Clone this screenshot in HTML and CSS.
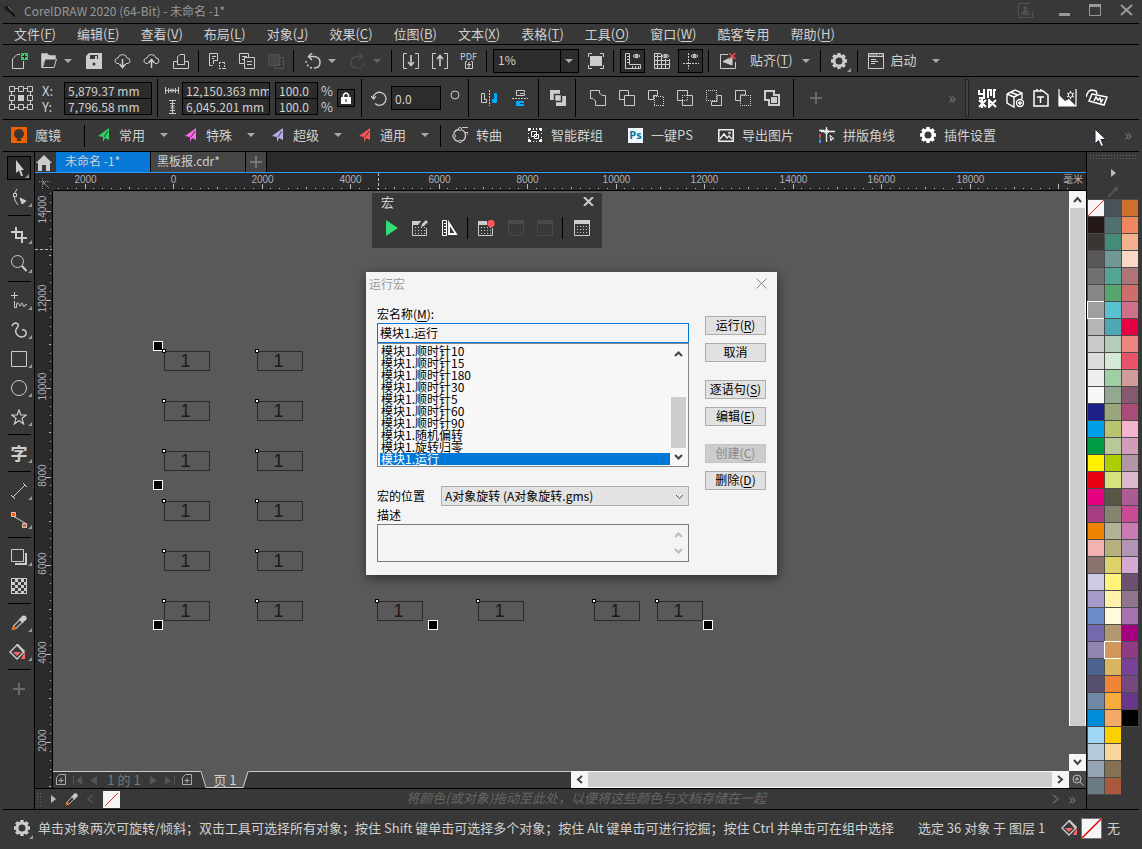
FILE: index.html
```html
<!DOCTYPE html>
<html lang="zh-CN">
<head>
    <meta charset="UTF-8">
    <meta name="viewport" content="width=device-width, initial-scale=1.0">
    <title>CorelDRAW 2020 (64-Bit) - 未命名 -1*</title>
    <link rel="stylesheet" href="styles.css">
</head>
<body>
    <!-- Shared icons -->
    <svg class="sprite" xmlns="http://www.w3.org/2000/svg">
        <symbol id="i-caret" viewBox="0 0 8 4"><path d="M0 0H8L4 4Z" fill="#aaa"/></symbol>
        <symbol id="i-plane" viewBox="0 0 12 14"><path d="M11 0V12L7 10L5 14V9L0 8Z" fill="currentColor"/><path d="M10 3L6 9" stroke="#383838" stroke-width="1"/></symbol>
        <symbol id="i-gear" viewBox="0 0 16 16">
            <circle cx="8" cy="8" r="5" fill="none" stroke="currentColor" stroke-width="3"/>
            <path d="M8 0V3M8 13V16M0 8H3M13 8H16M2.3 2.3L4.5 4.5M11.5 11.5L13.7 13.7M13.7 2.3L11.5 4.5M4.5 11.5L2.3 13.7" stroke="currentColor" stroke-width="3.4"/>
        </symbol>
        <symbol id="i-bucket" viewBox="0 0 20 18">
            <path d="M8 2L15 9L8 16L1 9Z" fill="none" stroke="#ccc" stroke-width="1.4"/>
            <path d="M7 1L9 1L16 8L14 10Z" fill="#ccc"/>
            <path d="M4 9H12L8 13Z" fill="#f66"/><path d="M16 9V16H12Z" fill="#f66"/>
        </symbol>
        <symbol id="i-picker" viewBox="0 0 16 16">
            <path d="M1.500 14.500L2.500 11L9 4.500L11.500 7L5 13.500Z" fill="none" stroke="#bbb" stroke-width="1.200"/>
            <path d="M1.500 14.500L3 11.500L5 13Z" fill="#f60" stroke="#f60"/>
            <path d="M8.500 3.500L12.500 7.500" stroke="#ccc" stroke-width="2"/><circle cx="12.800" cy="3.200" r="2.800" fill="#ccc"/>
        </symbol>
        <symbol id="i-grid" viewBox="0 0 16 16">
            <path d="M.5 .5H15.500V15.500H.5Z" fill="none" stroke="currentColor"/><path d="M0 0H16V4H0Z" fill="currentColor"/>
            <path d="M3 6.500H14M3 9.500H14M3 12.500H14" stroke="currentColor" stroke-dasharray="1 2"/>
        </symbol>
        <symbol id="i-addpage" viewBox="0 0 10 12"><path d="M3.500 .5H9.500V10.500H.5V3.500ZM5 4V9M2.500 6.500H7.500" fill="none" stroke="#aaa"/></symbol>
    </svg>

    <header class="titlebar">
        <svg class="app-icon" width="14" height="14" viewBox="0 0 14 14"><path d="M0 3L4 1L6 4L2 8Z" fill="#2b2b2b"/><path d="M4 2L12 11L13 13L10 12L2 4Z" fill="#151515"/><path d="M5 3L9 7" stroke="#777"/></svg>
        <span class="title">CorelDRAW 2020 (64-Bit) - 未命名 -1*</span>
        <div class="win-buttons">
            <svg class="account" width="16" height="16" viewBox="0 0 16 16" fill="none" stroke="#525252"><path d="M12 1.500H.5V15.500H14.500V10M3 12.500H12"/><path d="M4 11H11L8.500 8H6.500Z" fill="#525252"/><circle cx="7.500" cy="6" r="1.500" fill="#525252"/></svg>
            <button class="win-btn" aria-label="最小化"><svg width="11" height="12"><path d="M0 9H11V12H0Z" fill="#999"/></svg></button>
            <button class="win-btn" aria-label="最大化"><svg width="12" height="12"><path d="M.5 1.500H11.500V11.500H.5Z" fill="none" stroke="#999"/><path d="M0 0H12V3H0Z" fill="#999"/></svg></button>
            <button class="win-btn" aria-label="关闭"><svg width="13" height="12"><path d="M1 1L12 11M12 1L1 11" stroke="#999" stroke-width="2"/></svg></button>
        </div>
    </header>

    <nav class="menubar">
        <button>文件(<u>F</u>)</button>
        <button>编辑(<u>E</u>)</button>
        <button>查看(<u>V</u>)</button>
        <button>布局(<u>L</u>)</button>
        <button>对象(<u>J</u>)</button>
        <button>效果(<u>C</u>)</button>
        <button>位图(<u>B</u>)</button>
        <button>文本(<u>X</u>)</button>
        <button>表格(<u>T</u>)</button>
        <button>工具(<u>O</u>)</button>
        <button>窗口(<u>W</u>)</button>
        <button>酷客专用</button>
        <button>帮助(<u>H</u>)</button>
    </nav>

    <!-- Standard toolbar -->
    <div class="toolbar standard">
        <button class="ib" aria-label="新建"><svg width="18" height="16" viewBox="0 0 18 16"><path d="M9 1.500H6L1.500 6V15.500H12.500V8" fill="none" stroke="#ccc"/><path d="M10 0H17V7H10Z" fill="#3c6"/><path d="M13.500 1V6M11 3.500H16" stroke="#222"/></svg></button>
        <button class="ib" aria-label="打开"><svg width="16" height="16" viewBox="0 0 16 16"><path d="M1 15V1H6L8 3H14V6" fill="none" stroke="#ccc" stroke-width="1.500"/><path d="M1.500 14.500L4 6H15.500L13 14.500Z" fill="none" stroke="#ccc"/><path d="M1 1H6L8 3H14V6H4L1 13Z" fill="#ccc"/></svg></button>
        <button class="caret" aria-label="最近文档"><svg><use href="#i-caret"/></svg></button>
        <button class="ib" aria-label="保存"><svg width="16" height="16" viewBox="0 0 16 16"><path d="M0 3L3 0H16V16H0Z" fill="#ccc"/><path d="M4 2H12V6H4Z" fill="#383838"/><path d="M10 3V6" stroke="#ccc" stroke-width="2"/><circle cx="8" cy="11" r="1.500" fill="#383838"/></svg></button>
        <button class="ib" aria-label="从云打开"><svg width="17" height="16" viewBox="0 0 17 16" fill="none" stroke="#ccc"><path d="M5 10.500H3Q.5 9.500 1 7Q2 5 4 5Q5 1.500 8.500 1.500T13 5Q16 5 16 8Q16 10 14 10.500H12"/><path d="M8.500 6V14M5.500 11L8.500 14.500L11.500 11" stroke-width="1.500"/></svg></button>
        <button class="ib" aria-label="保存到云"><svg width="17" height="16" viewBox="0 0 17 16" fill="none" stroke="#ccc"><path d="M5 10.500H3Q.5 9.500 1 7Q2 5 4 5Q5 1.500 8.500 1.500T13 5Q16 5 16 8Q16 10 14 10.500H12"/><path d="M8.500 15V7M5.500 10L8.500 6.500L11.500 10" stroke-width="1.500"/></svg></button>
        <button class="ib" aria-label="打印"><svg width="16" height="16" viewBox="0 0 16 16" fill="none" stroke="#ccc"><path d="M4.500 11V4L7 1.500H11.500V11M4.500 8.500H.5V15.500H15.500V8.500H11.500M4 11.500H12"/></svg></button>
        <span class="sep"></span>
        <button class="ib" aria-label="剪切"><svg width="17" height="16" viewBox="0 0 17 16" fill="none" stroke="#ccc"><path d="M3.500 12.500H.5V.5H8.500V7.500H4.500V11M3 3.500H7M3 5.500H5"/><path d="M10 9.500H16M10 15.500H17M10.500 9V16M15.500 9V16" stroke-dasharray="2 1"/></svg></button>
        <button class="ib" aria-label="复制"><svg width="16" height="16" viewBox="0 0 16 16" fill="none" stroke="#ccc"><path d="M5 10.500H.5V.5H9.500V4M3 3.500H8M3 6.500H5"/><path d="M5.500 4.500H15.500V15.500H5.500ZM8 8.500H13M8 11.500H13"/></svg></button>
        <button class="ib" aria-label="粘贴" disabled><svg width="16" height="16" viewBox="0 0 16 16" fill="none" stroke="#505050"><path d="M.5 1.500H11.500V12.500H.5Z" fill="#454545"/><path d="M6.500 4.500H15.500V15.500H6.500ZM9 8.500H13M9 11.500H13"/></svg></button>
        <span class="sep"></span>
        <button class="ib" aria-label="撤销"><svg width="16" height="16" viewBox="0 0 16 16" fill="none" stroke="#ccc" stroke-width="1.500"><path d="M4 3.500H9Q15 4 15 9.500Q15 15 9 15"/><path d="M7 15Q2 14 1 8" stroke-dasharray="2 2"/><path d="M7 0L3.500 3.500L7 7"/></svg></button>
        <button class="caret" aria-label="撤销列表"><svg><use href="#i-caret"/></svg></button>
        <button class="ib" aria-label="重做" disabled><svg width="16" height="16" viewBox="0 0 16 16" fill="none" stroke="#4d4d4d" stroke-width="1.500"><path d="M12 3.500H7Q1 4 1 9.500Q1 15 7 15"/><path d="M9 15Q14 14 15 8" stroke-dasharray="2 2"/><path d="M9 0L12.500 3.500L9 7"/></svg></button>
        <button class="caret dim" aria-label="重做列表" disabled><svg><use href="#i-caret"/></svg></button>
        <span class="sep"></span>
        <button class="ib" aria-label="导入"><svg width="16" height="16" viewBox="0 0 16 16" fill="none" stroke="#ccc"><path d="M4 .5H.5V15.500H4M12 .5H15.500V15.500H12"/><path d="M8 2V12M5 9L8 12.500L11 9" stroke-width="1.600"/></svg></button>
        <button class="ib" aria-label="导出"><svg width="16" height="16" viewBox="0 0 16 16" fill="none" stroke="#ccc"><path d="M4 .5H.5V15.500H4M12 .5H15.500V15.500H12"/><path d="M8 13V3M5 6L8 2.500L11 6" stroke-width="1.600"/></svg></button>
        <button class="ib pdf"><span>PDF</span><svg width="8" height="8" viewBox="0 0 8 8" fill="none" stroke="#ccc"><path d="M2 .5H.5V7.500H7.500V.5H6M4 7V1M2 3.500H6"/></svg></button>
        <span class="sep"></span>
        <span class="zoom-box">
            <select aria-label="缩放级别"><option>1%</option></select>
            <svg><use href="#i-caret"/></svg>
        </span>
        <button class="ib" aria-label="全屏预览"><svg width="16" height="16" viewBox="0 0 16 16" fill="none" stroke="#ccc"><path d="M4 .5H.5V4M12 .5H15.500V4M4 15.500H.5V12M12 15.500H15.500V12"/><path d="M2 3H14V13H2Z" fill="#ccc" stroke="none"/></svg></button>
        <span class="sep"></span>
        <button class="ib on" aria-label="标尺"><svg width="16" height="16" viewBox="0 0 16 16" fill="none" stroke="#ccc"><path d="M.5 .5H4.500V11.500H15.500V15.500H.5ZM2 3.500H4M2 6.500H4M2 9.500H4M7.500 13V15M10.500 13V15M13.500 13V15"/><path d="M8 3Q11.500 -.5 15 3Q11.500 6.500 8 3Z"/><circle cx="11.500" cy="3" r="1" fill="#ccc"/></svg></button>
        <button class="ib" aria-label="网格"><svg width="16" height="16" viewBox="0 0 16 16" fill="none" stroke="#ccc"><path d="M.5 1V15.500H15.500M3.500 1V15M7.500 1V15M11.500 6V15M15.500 6V15M0 3.500H7M0 7.500H16M0 11.500H16M0 .5H7"/><path d="M8 3Q11.500 -.5 15 3Q11.500 6.500 8 3Z"/><circle cx="11.500" cy="3" r="1" fill="#ccc"/></svg></button>
        <button class="ib on" aria-label="辅助线"><svg width="16" height="16" viewBox="0 0 16 16" fill="none" stroke="#ccc"><path d="M0 10.500H16M5.500 0V16" stroke-dasharray="2 1"/><path d="M8 3Q11.500 -.5 15 3Q11.500 6.500 8 3Z"/><circle cx="11.500" cy="3" r="1" fill="#ccc"/></svg></button>
        <span class="sep"></span>
        <button class="ib" aria-label="贴齐关闭"><svg width="16" height="16" viewBox="0 0 16 16" fill="none" stroke="#ccc"><path d="M8 1.500H.5V15.500H15.500V9"/><path d="M3 8.500L12 4V12Z" fill="#ccc"/><path d="M9 0L15.500 6M15.500 0L9 6" stroke="#f44" stroke-width="1.500"/></svg></button>
        <button class="tb-text snap">贴齐(<u>T</u>)</button>
        <button class="caret" aria-label="贴齐选项"><svg><use href="#i-caret"/></svg></button>
        <span class="sep"></span>
        <button class="ib corner" aria-label="选项"><svg class="gear"><use href="#i-gear"/></svg></button>
        <span class="sep"></span>
        <button class="ib" aria-label="应用程序启动器"><svg width="16" height="16" viewBox="0 0 16 16" fill="none" stroke="#ccc"><path d="M.5 .5H15.500V15.500H.5ZM0 3.500H16M3 6.500H8M3 8.500H10M3 10.500H7"/><path d="M1 2H15" stroke-dasharray="9 1 1 1"/></svg></button>
        <button class="tb-text">启动</button>
        <button class="caret" aria-label="启动选项"><svg><use href="#i-caret"/></svg></button>
    </div>

    <!-- Property bar -->
    <div class="toolbar props">
        <svg class="origin" width="24" height="24" viewBox="0 0 24 24" fill="none" stroke="#ccc"><path d="M.5 .5H5.500V5.500H.5ZM9.500 .5H14.500V5.500H9.500ZM18.500 .5H23.500V5.500H18.500ZM.5 9.500H5.500V14.500H.5ZM18.500 9.500H23.500V14.500H18.500ZM.5 18.500H5.500V23.500H.5ZM9.500 18.500H14.500V23.500H9.500ZM18.500 18.500H23.500V23.500H18.500ZM6 2.500H9M15 2.500H18M6 21.500H9M15 21.500H18M2.500 6V9M2.500 15V18M21.500 6V9M21.500 15V18"/><path d="M9 9H15V15H9Z" fill="#ccc" stroke="none"/></svg>
        <div class="pair">
            <label for="pos-x">X:</label><input id="pos-x" value="5,879.37 mm">
            <label for="pos-y">Y:</label><input id="pos-y" value="7,796.58 mm">
        </div>
        <span class="sep tall"></span>
        <div class="pair size">
            <label for="size-w" aria-label="宽度"><svg width="14" height="7" fill="none" stroke="#ccc"><path d="M.5 0V7M13.500 0V7M1 3.500H13M3.500 1V6M6 1.500V5.500M8 1.500V5.500M10.500 1V6"/></svg></label><input id="size-w" value="12,150.363 mm">
            <label for="size-h" aria-label="高度"><svg width="7" height="14" fill="none" stroke="#ccc"><path d="M0 .5H7M0 13.500H7M3.500 1V13M1 3.500H6M1.500 6H5.500M1.500 8H5.500M1 10.500H6"/></svg></label><input id="size-h" value="6,045.201 mm">
        </div>
        <div class="pair scale">
            <input id="scale-x" value="100.0"><label for="scale-x">%</label>
            <input id="scale-y" value="100.0"><label for="scale-y">%</label>
        </div>
        <button class="lock" aria-label="锁定比率"><svg width="10" height="12" viewBox="0 0 10 12"><path d="M2.500 6V3Q5 -1 7.500 3V6" fill="none" stroke="#fff" stroke-width="1.500"/><path d="M0 5H10V12H0Z" fill="#fff"/><path d="M5 7V10" stroke="#222"/></svg></button>
        <span class="sep tall"></span>
        <label class="rotate" for="angle" aria-label="旋转角度"><svg width="16" height="15" viewBox="0 0 16 15" fill="none" stroke="#ccc"><path d="M2 7A6.500 6.500 0 1 1 4 12.500M0 5L2.500 8L5 5.500" stroke-width="1.300"/></svg></label>
        <input id="angle" class="angle" value="0.0">
        <svg class="degree" width="10" height="10"><circle cx="5" cy="5" r="4" fill="none" stroke="#ccc"/></svg>
        <span class="sep tall"></span>
        <button class="ib wide" aria-label="水平镜像"><svg width="16" height="16" viewBox="0 0 16 16" fill="none" stroke="#ccc"><path d="M.5 3.500H3.500V9.500H5.500V12.500H.5Z"/><path d="M8.500 0V16" stroke-dasharray="2 1"/><path d="M15.500 3.500H13.500V9.500H11.500V12.500H15.500Z" fill="#0af" stroke="#0af"/></svg></button>
        <button class="ib wide" aria-label="垂直镜像"><svg width="16" height="16" viewBox="0 0 16 16" fill="none" stroke="#ccc"><path d="M12.500 2.500V.5H4.500V5.500H12.500V3.500H8"/><path d="M0 8.500H16" stroke-dasharray="2 1"/><path d="M4 11H12V13H8V14H12V16H4Z" fill="#0af" stroke="none"/></svg></button>
        <span class="sep tall"></span>
        <button class="ib" aria-label="合并"><svg width="16" height="16" viewBox="0 0 16 16"><path d="M0 0H10V10H0ZM6 6H16V16H6Z" fill="#ccc"/><path d="M4.500 4.500H11.500V11.500H4.500Z" fill="#ccc" stroke="#383838" stroke-width="1.500"/></svg></button>
        <span class="sep tall"></span>
        <div class="shaping">
            <button class="ib" aria-label="焊接"><svg width="16" height="16" viewBox="0 0 16 16" fill="none" stroke="#ccc"><path d="M.5 .5H9.500V3L12 5.500H15.500V15.500H5.500V11L3 8.500H.5Z"/></svg></button>
            <button class="ib" aria-label="修剪"><svg width="16" height="16" viewBox="0 0 16 16" fill="none" stroke="#ccc"><path d="M5 9.500H.5V.5H9.500V5.500M5.500 5.500H15.500V15.500H5.500Z"/></svg></button>
            <button class="ib" aria-label="相交"><svg width="16" height="16" viewBox="0 0 16 16" fill="none" stroke="#ccc"><path d="M5.500 9.500H.5V.5H9.500V5.500H5.500Z"/><path d="M6 6.500H16M6 15.500H16M6.500 6V16M15.500 7V16" stroke-dasharray="1 1"/></svg></button>
            <button class="ib" aria-label="简化"><svg width="16" height="16" viewBox="0 0 16 16" fill="none" stroke="#ccc"><path d="M5 10.500H.5V.5H10.500V5M11 5.500H15.500V15.500H5.500V11"/><path d="M5 5.500H11M5 10.500H11M5.500 5V11M10.500 5V11" stroke-dasharray="1 1"/></svg></button>
            <button class="ib" aria-label="移除后面对象"><svg width="16" height="16" viewBox="0 0 16 16" fill="none" stroke="#ccc"><path d="M0 .5H11M0 10.500H11M.5 0V11M10.500 0V11" stroke-dasharray="1 1"/><path d="M11 5.500H15.500V15.500H5.500V11.500H11Z"/></svg></button>
            <button class="ib" aria-label="移除前面对象"><svg width="16" height="16" viewBox="0 0 16 16" fill="none" stroke="#ccc"><path d="M5.500 10.500H.5V.5H10.500V5H5.500Z"/><path d="M5 5.500H16M5 15.500H16M5.500 5V16M15.500 5V16" stroke-dasharray="1 1"/></svg></button>
            <button class="ib" aria-label="边界"><svg width="16" height="16" viewBox="0 0 16 16" fill="none" stroke="#ccc" stroke-width="2"><path d="M1 1H10V5H15V15H5V10H1Z"/><path d="M8 8H12V12H8Z" fill="#ccc"/></svg></button>
        </div>
        <span class="sep tall"></span>
        <button class="add" aria-label="添加"><svg width="12" height="12"><path d="M6 0V12M0 6H12" stroke="#6a6a6a" stroke-width="2"/></svg></button>
        <div class="script-tools">
            <span class="more">»</span>
            <span class="grip-bar"></span>
            <button aria-label="万能工具"><svg width="19" height="19" viewBox="0 0 19 19" fill="none" stroke="#fff" stroke-width="2"><path d="M1 1V5H6V0M6 5V9H1M10 9V1H13V7M16 9V1H18M1 11L8 18M8 11L1 18M4 10V19M11 11L18 18M18 11L11 18M11 10V19"/></svg></button>
            <button aria-label="打包"><svg width="18" height="19" viewBox="0 0 18 19" fill="none" stroke="#fff" stroke-width="1.400"><path d="M1 5L9 1L16 4V10M1 5V14L8 18V8L1 5M8 8L16 4M4 3L12 6"/><circle cx="14" cy="14" r="3.500"/><path d="M14 12V16M12 14H16"/></svg></button>
            <button aria-label="文本工具"><svg width="16" height="18" viewBox="0 0 16 18" fill="none" stroke="#fff" stroke-width="1.500"><path d="M1 2H10L15 6V17H1ZM4 2V0M8 2V0M4 8H11M7.500 8V14"/></svg></button>
            <button aria-label="图像工具"><svg width="19" height="18" viewBox="0 0 19 18"><path d="M1 0V17H18V0" fill="none" stroke="#fff" stroke-width="1.200"/><path d="M1 17V6L7 12L11 10L18 17Z" fill="#fff"/><path d="M12.500 2V10M9 4L16 8M16 4L9 8" stroke="#fff"/><circle cx="12.500" cy="6" r="2.300" fill="#383838" stroke="#fff"/></svg></button>
            <button aria-label="卡片"><svg width="22" height="18" viewBox="0 0 22 18" fill="none" stroke="#fff" stroke-width="1.500"><path d="M6 5L21 8L18 16L3 12Z"/><path d="M0 8Q2 1 6 1L10 2L11 5M8 12L10 8L12 11L14 9L15 13L17 10"/></svg></button>
        </div>
    </div>

    <!-- Plugin bar -->
    <div class="toolbar plugins">
        <button class="plug brand"><svg width="16" height="16"><path d="M0 0H16V16H0Z" fill="#f06000"/><circle cx="8" cy="7" r="5" fill="#3a3530"/><path d="M6 12H10V14H6Z" fill="#3a3530"/></svg>魔镜</button>
        <span class="sep"></span>
        <button class="plug drop"><svg class="plane green"><use href="#i-plane"/></svg>常用<svg class="arrow"><use href="#i-caret"/></svg></button>
        <button class="plug drop"><svg class="plane pink"><use href="#i-plane"/></svg>特殊<svg class="arrow"><use href="#i-caret"/></svg></button>
        <button class="plug drop"><svg class="plane lilac"><use href="#i-plane"/></svg>超级<svg class="arrow"><use href="#i-caret"/></svg></button>
        <button class="plug drop"><svg class="plane red"><use href="#i-plane"/></svg>通用<svg class="arrow"><use href="#i-caret"/></svg></button>
        <span class="sep"></span>
        <div class="plug-list">
            <button class="plug"><svg width="16" height="16" viewBox="0 0 16 16" fill="none" stroke="#ccc"><circle cx="7.500" cy="8.500" r="6" stroke-width="1.300" stroke-dasharray="8 2"/><circle cx="8" cy="2" r="1.500" fill="#383838"/><circle cx="2" cy="9" r="1.500" fill="#383838"/><circle cx="8" cy="14.500" r="1.300" fill="#383838"/><path d="M10 .5H16M13 5.500H16V8"/></svg>转曲</button>
            <button class="plug"><svg width="16" height="16" viewBox="0 0 16 16"><path d="M1 1h3v2h-1v1h-2zM6 1h1v2h-1zM9 1h1v2h-1zM12 1h3v3h-2v-1h-1zM1 6h1v1h-1zM1 10h1v1h-1zM14 6h1v1h-1zM14 10h1v1h-1zM1 12h2v1h1v2h-3zM6 14h1v1h-1zM9 14h1v1h-1zM13 12h2v3h-3v-2h1z" fill="#fff"/><path d="M4.500 4.500H9.500V9.500H4.500ZM7.500 7.500H11.500V11.500H7.500Z" fill="none" stroke="#fff"/></svg>智能群组</button>
            <button class="plug ps"><span class="ps-logo">Ps</span>一键PS</button>
            <button class="plug"><svg width="16" height="13" viewBox="0 0 16 13" fill="none" stroke="#eee"><path d="M.8 .8H15.200V12.200H.8Z" stroke-width="1.600"/><path d="M2 10L6 5L9 9L11 7L14 10" stroke-width="1.400"/><circle cx="11.500" cy="4" r="1"/></svg>导出图片</button>
            <button class="plug"><svg width="16" height="16" viewBox="0 0 16 16" fill="none" stroke="#eee"><path d="M2 4.500H16M7.500 0V15M0 3.500H5" stroke-width="1.300"/><circle cx="7.500" cy="4.500" r="2"/><path d="M11 8L15 12H12V14Z"/><path d="M1 7V10" stroke="#e44" stroke-width="2"/><path d="M1 10V13" stroke="#4a6"/><path d="M1 13V16" stroke="#48f" stroke-width="2"/></svg>拼版角线</button>
            <button class="plug"><svg class="gear white"><use href="#i-gear"/></svg>插件设置</button>
        </div>
        <span class="more">»</span>
        <svg class="pointer" width="13" height="20" viewBox="0 0 13 20"><path d="M1 1V16L4.500 12.500L7 18.500L9.500 17.500L7 11.500H12Z" fill="#fff" stroke="#223"/></svg>
    </div>

    <main class="workspace">
        <aside class="toolbox">
            <button class="tool on"><svg width="16" height="17" viewBox="0 0 16 17"><path d="M5 0V13L8 10.500L10 16H12L10 10H13Z" fill="#ccc"/></svg></button>
            <button class="tool"><svg width="16" height="17" viewBox="0 0 16 17" fill="none" stroke="#ccc"><path d="M6 0Q0 8 7 16"/><path d="M2.500 4.500H5.500V7.500H2.500Z" fill="#383838"/><path d="M9 9L15 12L11 15Z" fill="#ccc"/></svg></button>
            <span class="rule"></span>
            <button class="tool"><svg width="16" height="16" viewBox="0 0 16 16" fill="none" stroke="#ccc" stroke-width="2"><path d="M0 5H11V16M5 0V11H16"/></svg></button>
            <button class="tool"><svg width="16" height="17" viewBox="0 0 16 17" fill="none" stroke="#ccc"><circle cx="6.500" cy="6.500" r="6"/><path d="M11 11L15.500 16" stroke-width="2"/></svg></button>
            <span class="rule"></span>
            <button class="tool"><svg width="16" height="17" viewBox="0 0 16 17" fill="none" stroke="#ccc"><path d="M3.500 0V7M0 3.500H7M3.500 9V15.500H5.500V12Q7 9 8 12.500T10 12.500T12 13T14 13L16 12.500"/></svg></button>
            <button class="tool"><svg width="16" height="16" viewBox="0 0 16 16" fill="none" stroke="#ccc" stroke-width="1.500"><path d="M1 4Q2 1 5 1Q9 2 6 6Q4 8 5 11Q7 15 11 15Q16 14 15 10Q14 7 11 8"/></svg></button>
            <button class="tool"><svg width="16" height="16" viewBox="0 0 16 16" fill="none" stroke="#ccc"><path d="M.5 .5H15.500V15.500H.5Z"/></svg></button>
            <button class="tool"><svg width="16" height="16" viewBox="0 0 16 16" fill="none" stroke="#ccc"><circle cx="8" cy="8" r="7.500"/></svg></button>
            <button class="tool"><svg width="16" height="16" viewBox="0 0 16 16" fill="none" stroke="#ccc"><path d="M8 1L9.800 6H15.300L11 9.300L12.600 15L8 11.500L3.400 15L5 9.300L.7 6H6.200Z" stroke-width="1.200"/></svg></button>
            <span class="rule"></span>
            <button class="tool glyph">字</button>
            <span class="rule"></span>
            <button class="tool"><svg width="16" height="16" viewBox="0 0 16 16" fill="none" stroke="#ccc"><path d="M2 14L14 2M0 12L4 16M12 0L16 4"/></svg></button>
            <button class="tool"><svg width="16" height="16" viewBox="0 0 16 16"><path d="M2 4L14 11" stroke="#ccc"/><path d="M.5 .5H4.500V4.500H.5ZM11.500 11.500H15.500V15.500H11.500Z" fill="#f50" stroke="#ccc"/></svg></button>
            <span class="rule"></span>
            <button class="tool"><svg width="17" height="16" viewBox="0 0 17 16" fill="none" stroke="#ccc"><path d="M.5 .5H12.500V12.500H.5Z"/><path d="M15 4V15H4" stroke-width="2"/></svg></button>
            <button class="tool plain"><span class="checker"></span></button>
            <span class="rule"></span>
            <button class="tool"><svg width="16" height="16"><use href="#i-picker"/></svg></button>
            <button class="tool"><svg width="20" height="18"><use href="#i-bucket"/></svg></button>
            <span class="rule"></span>
            <button class="tool plain add-tool"><svg width="12" height="12"><path d="M6 0V12M0 6H12" stroke="#6a6a6a" stroke-width="2"/></svg></button>
        </aside>

        <section class="document">
            <div class="tabs">
                <button class="home" aria-label="欢迎屏幕"><svg width="16" height="16" viewBox="0 0 16 16"><path d="M8 0L16 8H14V16H10V10H6V16H2V8H0Z" fill="#ccc"/></svg></button>
                <button class="tab active">未命名 -1*</button>
                <button class="tab">黑板报.cdr*</button>
                <button class="tab-add" aria-label="新建文档"><svg width="12" height="12"><path d="M6 0V12M0 6H12" stroke="#777" stroke-width="2"/></svg></button>
            </div>
            <div class="ruled">
                <div class="ruler-corner"><svg width="11" height="11" fill="none" stroke="#888"><path d="M0 3.500H11M3.500 0V11" stroke-dasharray="1 1"/><path d="M4 4L10 10M4 7V4H7"/></svg></div>
                <svg class="ruler-h" id="ruler-h"></svg>
                <svg class="ruler-v" id="ruler-v"></svg>

                <div class="view">
                    <div class="canvas" id="canvas">
                        <div class="macro-bar">
                            <div class="macro-head"><span>宏</span><button aria-label="关闭"><svg width="11" height="9"><path d="M1 0L10 9M10 0L1 9" stroke="#ccc" stroke-width="2"/></svg></button></div>
                            <div class="macro-tools">
                                <button class="ib"><svg width="12" height="16"><path d="M0 0L12 8L0 16Z" fill="#3d7"/></svg></button>
                                <button class="ib"><svg width="17" height="16" viewBox="0 0 17 16"><path d="M9 1.500H.5V15.500H14.500V8" fill="none" stroke="#ccc"/><path d="M0 1H9L6 5H0Z" fill="#ccc"/><path d="M3 7.500H13M3 10.500H13M3 13.500H13" stroke="#ccc" stroke-dasharray="1 2"/><path d="M9 7L10 4L14 0L16 2L12 6Z" fill="#ccc"/></svg></button>
                                <button class="ib"><svg width="16" height="16" viewBox="0 0 16 16" fill="none" stroke="#fff"><path d="M.5 .5H4.500V15.500H.5ZM2 3.500H4M2 6.500H4M2 9.500H4M2 12.500H4"/><path d="M7 3V14H14Z" stroke-width="1.800"/></svg></button>
                                <span class="sep"></span>
                                <button class="ib"><svg width="17" height="16" viewBox="0 0 17 16"><path d="M9 1.500H.5V15.500H14.500V8" fill="none" stroke="#ccc"/><path d="M0 1H9V5H0Z" fill="#ccc"/><path d="M3 7.500H13M3 10.500H13M3 13.500H13" stroke="#ccc" stroke-dasharray="1 2"/><circle cx="13" cy="3.500" r="3.700" fill="#f55"/></svg></button>
                                <button class="ib" disabled><svg class="gear faint"><use href="#i-grid"/></svg></button>
                                <button class="ib" disabled><svg class="gear faint"><use href="#i-grid"/></svg></button>
                                <span class="sep"></span>
                                <button class="ib"><svg class="gear"><use href="#i-grid"/></svg></button>
                            </div>
                        </div>

                        <div class="dialog" role="dialog" aria-labelledby="dlg-title">
                            <div class="dialog-head">
                                <span id="dlg-title">运行宏</span>
                                <button aria-label="关闭"><svg width="11" height="11"><path d="M.5 .5L10.500 10.500M10.500 .5L.5 10.500" stroke="#888"/></svg></button>
                            </div>
                            <div class="dialog-body">
                                <div class="dialog-main">
                                    <label for="macro-name">宏名称(<u>M</u>):</label>
                                    <input id="macro-name" class="macro-name" value="模块1.运行">
                                    <div class="list-box">
                                        <ul role="listbox" aria-label="宏名称">
                                            <li>模块1.顺时针10</li>
                                            <li>模块1.顺时针15</li>
                                            <li>模块1.顺时针180</li>
                                            <li>模块1.顺时针30</li>
                                            <li>模块1.顺时针5</li>
                                            <li>模块1.顺时针60</li>
                                            <li>模块1.顺时针90</li>
                                            <li>模块1.随机偏转</li>
                                            <li>模块1.旋转归零</li>
                                            <li class="selected">模块1.运行</li>
                                        </ul>
                                        <div class="list-scroll">
                                            <svg width="9" height="6"><path d="M1 5L4.500 1.500L8 5" fill="none" stroke="#444" stroke-width="2"/></svg>
                                            <span></span>
                                            <svg width="9" height="6"><path d="M1 1L4.500 4.500L8 1" fill="none" stroke="#444" stroke-width="2"/></svg>
                                        </div>
                                    </div>
                                    <div class="location">
                                        <label for="macro-loc">宏的位置</label>
                                        <select id="macro-loc"><option>A对象旋转 (A对象旋转.gms)</option></select>
                                        <svg width="9" height="6"><path d="M1 1L4.500 4.500L8 1" fill="none" stroke="#555"/></svg>
                                    </div>
                                    <label class="desc-label" for="macro-desc">描述</label>
                                    <div class="desc">
                                        <textarea id="macro-desc"></textarea>
                                        <svg width="9" height="22"><path d="M1 5L4.500 1.500L8 5M1 17L4.500 20.500L8 17" fill="none" stroke="#bbb" stroke-width="2"/></svg>
                                    </div>
                                </div>
                                <div class="dialog-actions">
                                    <button>运行(<u>R</u>)</button>
                                    <button>取消</button>
                                    <button class="group">逐语句(<u>S</u>)</button>
                                    <button>编辑(<u>E</u>)</button>
                                    <button class="group" disabled>创建(<u>C</u>)</button>
                                    <button>删除(<u>D</u>)</button>
                                </div>
                            </div>
                        </div>
                    </div>
                    <div class="scroll-v">
                        <button aria-label="向上"><svg width="9" height="7"><path d="M1 6L4.500 2L8 6" fill="none" stroke="#444" stroke-width="2"/></svg></button>
                        <span class="thumb"></span>
                        <button aria-label="向下"><svg width="9" height="7"><path d="M1 1L4.500 5L8 1" fill="none" stroke="#444" stroke-width="2"/></svg></button>
                    </div>
                </div>

                <div class="page-row">
                    <div class="pages">
                        <button aria-label="添加页"><svg width="10" height="12"><use href="#i-addpage"/></svg></button>
                        <button aria-label="第一页"><svg width="10" height="9"><path d="M9 0V9L3 4.500ZM0 0H1V9H0Z" fill="#555"/></svg></button>
                        <button aria-label="上一页"><svg width="8" height="9"><path d="M7 0V9L0 4.500Z" fill="#555"/></svg></button>
                        <span class="page-count">1 的 1</span>
                        <button aria-label="下一页"><svg width="8" height="9"><path d="M0 0V9L7 4.500Z" fill="#555"/></svg></button>
                        <button aria-label="最后一页"><svg width="10" height="9"><path d="M0 0V9L6 4.500ZM9 0H10V9H9Z" fill="#555"/></svg></button>
                        <button aria-label="添加页"><svg width="10" height="12"><use href="#i-addpage"/></svg></button>
                        <button class="page-tab"><svg width="48" height="17" viewBox="0 0 48 17"><path d="M0 0L5 16H43L48 0Z" fill="#595959"/><path d="M0 .5L5 16.500H42L47 .5" fill="none" stroke="#ccc"/></svg><span>页 1</span></button>
                    </div>
                    <div class="scroll-h">
                        <button aria-label="向左"><svg width="7" height="9"><path d="M6 1L2 4.500L6 8" fill="none" stroke="#444" stroke-width="2"/></svg></button>
                        <span class="thumb"></span>
                        <button aria-label="向右"><svg width="7" height="9"><path d="M1 1L5 4.500L1 8" fill="none" stroke="#444" stroke-width="2"/></svg></button>
                    </div>
                    <button class="navigator" aria-label="导航器"><svg width="12" height="12" fill="none" stroke="#bbb"><circle cx="5" cy="5" r="4"/><path d="M8 8L11.500 11.500M5 3V7M3 5H7"/></svg></button>
                </div>
            </div>
            <div class="doc-palette">
                <span class="dots"></span>
                <svg width="5" height="8"><path d="M0 0L5 4L0 8Z" fill="#bbb"/></svg>
                <svg width="13" height="13"><use href="#i-picker"/></svg>
                <svg width="7" height="10"><path d="M6 1L1 5L6 9" fill="none" stroke="#555" stroke-width="1.500"/></svg>
                <svg class="no-color" width="17" height="17"><path d="M0 0H17V17H0Z" fill="#f5f5f5"/><path d="M2 15L15 2" stroke="#e22"/></svg>
                <em>将颜色(或对象)拖动至此处，以便将这些颜色与文档存储在一起</em>
                <svg width="7" height="10"><path d="M1 1L6 5L1 9" fill="none" stroke="#666" stroke-width="1.500"/></svg>
                <span class="more">»</span>
            </div>
        </section>

        <aside class="palette">
            <div class="palette-head">
                <span class="dots"></span>
                <svg width="5" height="8"><path d="M0 0L5 4L0 8Z" fill="#bbb"/></svg>
                <svg class="ghost" width="12" height="12"><path d="M1 11L8 4M7 2L10 5M9 1L11 3" stroke="#555" stroke-width="2"/></svg>
            </div>
            <div class="swatches" id="swatches"></div>
        </aside>
    </main>

    <footer class="status">
        <button class="ib corner" aria-label="状态栏选项"><svg class="gear"><use href="#i-gear"/></svg></button>
        <span class="hint">单击对象两次可旋转/倾斜；双击工具可选择所有对象；按住 Shift 键单击可选择多个对象；按住 Alt 键单击可进行挖掘；按住 Ctrl 并单击可在组中选择</span>
        <span class="selection">选定 36 对象 于 图层 1</span>
        <span class="fill-info">
            <svg width="20" height="18"><use href="#i-bucket"/></svg>
            <svg width="21" height="21"><path d="M.5 .5H20.500V20.500H.5Z" fill="#f5f5f5" stroke="#777"/><path d="M1 20L20 1" stroke="#d00" stroke-width="1.500"/></svg>
            <span>无</span>
        </span>
    </footer>

    <script src="script.js"></script>
</body>
</html>
```
FILE: styles.css
```css
*,
*::before {
    box-sizing: border-box;
}

body {
    margin: 0;
    padding: 0 3px;
    display: flex;
    flex-direction: column;
    height: 100vh;
    overflow: hidden;
    background: #383838;
    color: #d0d0d0;
    font-family: "Noto Sans CJK SC", sans-serif;
    font-size: 13px;
    line-height: 20px;
    white-space: nowrap;
}

button,
input,
select,
textarea {
    font: inherit;
    color: inherit;
    margin: 0;
    padding: 0;
    border: 0;
    border-radius: 0;
    background: none;
    outline: none;
    appearance: none;
}

svg {
    display: block;
    flex: none;
}

.sprite {
    position: absolute;
    width: 0;
    height: 0;
}

/* Title and menu */
.titlebar {
    flex: none;
    display: flex;
    align-items: center;
    height: 24px;
    padding: 0 6px 2px 0;
    border-bottom: 1px solid #000;
    color: #999;
}

.app-icon {
    margin-right: 7px;
}

.title {
    font-size: 12px;
}

.win-buttons {
    display: flex;
    align-items: center;
    gap: 19px;
    margin: 0 0 2px auto;
}

.account {
    margin-right: 6px;
}

.menubar {
    flex: none;
    display: flex;
    height: 21px;
    border-bottom: 1px solid #000;
}

.menubar button {
    padding: 0 10px 2px 11px;
}

u {
    text-underline-offset: 2px;
}

/* Toolbars */
.toolbar {
    flex: none;
    display: flex;
    align-items: center;
    border-bottom: 1px solid #000;
}

.ib {
    flex: none;
    display: flex;
    align-items: center;
    justify-content: center;
    width: 29px;
    height: 24px;
}

.ib.on {
    width: 25px;
    margin: 0 2px;
    border: 1px solid #000;
    background: #2c2c2c;
}

.ib.wide {
    width: 31px;
}

.sep {
    flex: none;
    width: 1px;
    height: 22px;
    margin: 0 4px 0 3px;
    background: #000;
}

.sep.tall {
    height: 38px;
}

.caret {
    flex: none;
    width: 16px;
    height: 24px;
    padding-left: 1px;
}

.caret svg,
.zoom-box svg,
.arrow {
    width: 8px;
    height: 4px;
}

.dim {
    opacity: 0.4;
}

.gear {
    width: 16px;
    height: 16px;
    color: #ccc;
}

.gear.white {
    color: #fff;
}

.gear.faint {
    color: #4a4a4a;
}

.corner,
.tool {
    position: relative;
}

.corner::after,
.tool::after {
    content: "";
    position: absolute;
    right: 3px;
    bottom: 1px;
    border: 2px solid transparent;
    border-right-color: #999;
    border-bottom-color: #999;
}

.standard {
    height: 32px;
    padding-left: 2px;
}

.pdf {
    flex-direction: column;
    font-size: 9px;
    line-height: 9px;
}

.zoom-box {
    position: relative;
    width: 86px;
    height: 24px;
    margin: 0 2px;
    border: 1px solid #000;
    background: #2c2c2c;
}

.zoom-box select {
    width: 100%;
    height: 22px;
    padding: 0 0 2px 4px;
    font-size: 12px;
}

.zoom-box svg {
    position: absolute;
    right: 5px;
    top: 9px;
}

.zoom-box::after {
    content: "";
    position: absolute;
    right: 17px;
    top: 0;
    width: 1px;
    height: 22px;
    background: #000;
}

.tb-text {
    padding: 0 14px 2px 0;
}

.tb-text.snap {
    padding: 0 8px 2px;
}

.props {
    height: 43px;
    padding-left: 6px;
}

.props input {
    width: 88px;
    height: 17px;
    padding-left: 3px;
    border: 1px solid #000;
    background: #2c2c2c;
    font-size: 12px;
    line-height: 15px;
}

.pair {
    display: grid;
    grid-template-columns: 22px 88px;
    grid-auto-rows: 16px;
    align-items: start;
    margin: 0 2px 0 9px;
    line-height: 17px;
}

.pair.size {
    grid-template-columns: 17px 88px;
    margin: 0 5px 0 3px;
}

.pair.size label {
    display: flex;
    align-items: center;
    justify-content: center;
    height: 17px;
    padding-right: 3px;
}

.pair.scale {
    grid-template-columns: 43px 16px;
    column-gap: 3px;
    margin: 0;
}

.pair.scale input {
    width: 43px;
}

.lock {
    display: flex;
    align-items: center;
    justify-content: center;
    width: 18px;
    height: 18px;
    margin-right: 3px;
    border: 1px solid #000;
    background: #2c2c2c;
}

.rotate {
    margin: 0 4px 0 5px;
}

.props .angle {
    width: 50px;
    height: 24px;
}

.degree {
    margin: 0 5px 6px 9px;
}

.shaping {
    display: flex;
    margin: 0 4px 0 3px;
}

.add {
    margin-left: 12px;
}

.script-tools {
    display: flex;
    align-items: center;
    gap: 9px;
    margin: 0 31px 0 auto;
}

.more {
    padding-bottom: 3px;
    color: #777;
    font-size: 16px;
}

.grip-bar {
    width: 4px;
    height: 38px;
    border: 1px solid #222;
    background: #444;
}

.plugins {
    position: relative;
    height: 32px;
    padding-left: 8px;
}

.plug {
    display: flex;
    align-items: center;
    gap: 8px;
    padding-bottom: 1px;
}

.plug.brand {
    margin-right: 20px;
}

.plug.drop {
    gap: 9px;
    width: 87px;
    padding-left: 9px;
}

.plane {
    width: 12px;
    height: 14px;
}

.arrow {
    margin-left: 6px;
}

.green { color: #3c6; }
.pink { color: #f6e; }
.lilac { color: #b4b0ee; }
.red { color: #f55; }

.plug-list {
    display: flex;
    gap: 25px;
    margin-left: 7px;
}

.ps-logo {
    width: 15px;
    height: 15px;
    background: #eef6fb;
    color: #07a;
    font: bold 11px/14px "Open Sans", sans-serif;
}

.plugins .more {
    margin: 0 7px 0 auto;
}

.pointer {
    position: absolute;
    right: 32px;
    top: 8px;
}

/* Workspace */
.workspace {
    flex: 1;
    display: flex;
    min-height: 0;
    border-bottom: 1px solid #000;
}

.toolbox {
    flex: none;
    width: 32px;
    padding-top: 2px;
    border-right: 1px solid #000;
}

.tool {
    display: flex;
    align-items: center;
    justify-content: center;
    width: 30px;
    height: 29px;
    padding-left: 2px;
}

.tool.on {
    width: 24px;
    height: 24px;
    margin: 2px 0 3px 4px;
    padding: 0;
    border: 1px solid #000;
    background: #2a2a2a;
}

.tool::after {
    right: 1px;
    bottom: 5px;
}

.tool.on::after {
    bottom: 1px;
}

.tool.plain::after {
    display: none;
}

.tool.glyph {
    padding-bottom: 2px;
    font-size: 17px;
    font-weight: bold;
}

.rule {
    display: block;
    height: 1px;
    margin: 3px 3px 4px 5px;
    background: #000;
}

.add-tool {
    margin-top: 4px;
}

.checker {
    width: 16px;
    height: 16px;
    border: 1px solid #ccc;
    background: repeating-conic-gradient(#ccc 0 25%, #383838 0 50%) 0 0 / 6px 6px;
}

.document {
    flex: 1;
    min-width: 0;
    display: flex;
    flex-direction: column;
}

.tabs {
    flex: none;
    display: flex;
    height: 21px;
    background: #2a2a2d;
    border-bottom: 1px solid #39f;
}

.home {
    width: 21px;
    padding: 2px 0 0 1px;
    background: #383838;
}

.tab {
    width: 95px;
    padding: 0 0 2px 6px;
    border-right: 1px solid #000;
    background: #454545;
    font-size: 12px;
    text-align: left;
    line-height: 18px;
}

.tab.active {
    padding-left: 9px;
    background: #0878d8;
}

.tab-add {
    width: 21px;
    padding-left: 4px;
    border-right: 1px solid #000;
    background: #454545;
}

.ruled {
    flex: 1;
    min-height: 0;
    display: grid;
    grid-template-columns: 18px minmax(0, 1fr);
    grid-template-rows: 18px minmax(0, 1fr) 17px;
    border-bottom: 1px solid #000;
}

.ruler-corner,
.ruler-h,
.ruler-v {
    width: 100%;
    height: 100%;
    background: #2b2b2d;
    overflow: hidden;
}

.ruler-corner {
    padding: 5px 0 0 4px;
}

.ruler-h {
    border-bottom: 1px solid #000;
}

.ruler-v {
    grid-row: 2 / 4;
    border-right: 1px solid #000;
}

.ruler-h text,
.ruler-v text {
    fill: #b0b0b0;
    font: 10px "Liberation Sans", "Noto Sans CJK SC", sans-serif;
    text-anchor: middle;
}

.view {
    display: flex;
    background: #595959;
}

.canvas {
    flex: 1;
    position: relative;
    overflow: hidden;
}

.shape {
    position: absolute;
    width: 46px;
    height: 20px;
    border: 1px solid #302824;
    color: #231815;
    font: 18px/19px "Liberation Sans", sans-serif;
    text-align: center;
    padding-right: 3px;
}

.shape::before {
    content: "";
    position: absolute;
    left: -3px;
    top: -3px;
    width: 4px;
    height: 4px;
    border: 1px solid #000;
    background: #fff;
}

.handle {
    position: absolute;
    width: 10px;
    height: 10px;
    border: 1px solid #fff;
    background: #000;
}

.scroll-v {
    display: flex;
    flex-direction: column;
    width: 17px;
    background: #595959;
}

.scroll-v button,
.scroll-h button {
    flex: none;
    display: flex;
    align-items: center;
    justify-content: center;
    width: 17px;
    height: 17px;
    background: #f5f5f5;
}

.scroll-v .thumb {
    flex: 1;
    margin-bottom: 28px;
    border-left: 1px solid #fff;
    border-right: 1px solid #fff;
    background: #cdcdcd;
}

.page-row {
    display: flex;
    min-width: 0;
}

.pages {
    position: relative;
    flex: none;
    display: flex;
    align-items: center;
    gap: 7px;
    width: 518px;
    padding-left: 3px;
    border-top: 1px solid #ccc;
    color: #777;
    line-height: 16px;
}

.page-tab {
    position: relative;
    align-self: flex-start;
    width: 48px;
    height: 17px;
    margin: -1px 0 0 2px;
    color: #d0d0d0;
}

.page-tab svg {
    position: absolute;
    left: 0;
    top: 0;
}

.page-tab span {
    position: relative;
}

.page-count {
    width: 38px;
    text-align: center;
}

.scroll-h {
    flex: 1;
    display: flex;
    background: #f5f5f5;
}

.scroll-h .thumb {
    flex: 1;
    margin: 1px 0;
    background: #cdcdcd;
}

.navigator {
    width: 17px;
    padding-left: 3px;
    background: #484848;
}

.doc-palette {
    flex: none;
    display: flex;
    align-items: center;
    gap: 9px;
    height: 20px;
    padding: 0 10px 0 1px;
    color: #666;
}

.dots {
    width: 6px;
    height: 14px;
    background: radial-gradient(#666 1px, transparent 1px) 0 0 / 3px 3px;
}

.doc-palette em {
    flex: 1;
    padding-bottom: 2px;
    text-align: center;
}

/* Color palette */
.palette {
    flex: none;
    width: 53px;
    border-left: 1px solid #000;
}

.palette-head {
    display: flex;
    flex-direction: column;
    align-items: center;
    gap: 9px;
    height: 47px;
    padding-top: 2px;
    overflow: hidden;
}

.palette-head .dots {
    flex: none;
    width: 48px;
    height: 6px;
}

.swatches {
    display: flex;
    align-items: flex-start;
}

.swatch-col {
    display: grid;
    grid-auto-rows: 17px;
    width: 17px;
    padding-top: 1px;
    background: #4c4c4c;
}

.swatch {
    width: 16px;
    height: 16px;
    margin-left: 1px;
}

.swatch.current {
    outline: 1px solid #fff;
}

.swatch.none {
    background: linear-gradient(to bottom right, #f5f5f5 48%, #e22 48% 53%, #f5f5f5 53%);
}

/* Floating macro bar */
.macro-bar {
    position: absolute;
    left: 319px;
    top: 2px;
    width: 230px;
    height: 55px;
    background: #383838;
}

.macro-head {
    display: flex;
    justify-content: space-between;
    height: 20px;
    padding: 0 8px 3px 9px;
    line-height: 17px;
}

.macro-tools {
    display: flex;
    align-items: center;
    height: 30px;
    padding-left: 5px;
}

/* Run macro dialog */
.dialog {
    position: absolute;
    left: 313px;
    top: 81px;
    width: 411px;
    height: 303px;
    background: #f4f4f4;
    color: #000;
    box-shadow: 1px 3px 10px rgba(0, 0, 0, 0.5);
    font-size: 12px;
    line-height: 18px;
}

.dialog-head {
    display: flex;
    align-items: center;
    justify-content: space-between;
    height: 25px;
    padding: 0 10px 2px 3px;
    color: #999;
}

.dialog-body {
    display: flex;
    gap: 16px;
    padding: 8px 11px;
}

.dialog-main {
    width: 312px;
}

.dialog-main label {
    display: block;
}

.macro-name {
    display: block;
    width: 100%;
    height: 20px;
    padding: 0 2px 2px;
    border: 1px solid #0078d7;
}

.list-box {
    display: flex;
    height: 124px;
    padding: 1px 2px;
    border: 1px solid #828790;
    background: #f7f7f7;
}

.list-box ul {
    flex: 1;
    margin: 0;
    padding: 0;
    list-style: none;
    line-height: 12px;
}

.list-box li {
    height: 12px;
    padding-left: 1px;
    overflow: hidden;
}

.list-box .selected {
    background: #0078d7;
    color: #fff;
}

.list-scroll {
    display: flex;
    flex-direction: column;
    align-items: center;
    width: 16px;
    padding: 6px 0 4px;
}

.list-scroll span {
    width: 15px;
    height: 51px;
    margin: 40px 0 6px;
    background: #cdcdcd;
}

.location {
    position: relative;
    display: flex;
    align-items: center;
    justify-content: space-between;
    margin-top: 19px;
}

.location select {
    width: 248px;
    height: 20px;
    padding-left: 3px;
    border: 1px solid #adadad;
    background: #e3e3e3;
}

.location svg {
    position: absolute;
    right: 5px;
    top: 8px;
}

.desc {
    position: relative;
}

.desc textarea {
    display: block;
    width: 100%;
    height: 38px;
    border: 1px solid #7a7a7a;
    resize: none;
}

.desc svg {
    position: absolute;
    right: 6px;
    top: 8px;
}

.dialog-actions {
    display: flex;
    flex-direction: column;
    gap: 8px;
    padding-top: 11px;
}

.dialog-actions button {
    width: 61px;
    height: 19px;
    padding-bottom: 1px;
    border: 1px solid #adadad;
    background: #e1e1e1;
    line-height: 16px;
}

.dialog-actions .group {
    margin-top: 10px;
}

.dialog-actions button:disabled {
    border-color: #c4c4c4;
    background: #ccc;
    color: #888;
}

/* Status bar */
.status {
    flex: none;
    display: flex;
    align-items: center;
    height: 39px;
    padding: 0 0 3px 4px;
}

.hint {
    margin-left: 2px;
}

.selection {
    margin-left: 24px;
}

.fill-info {
    display: flex;
    align-items: center;
    margin: 0 19px 0 auto;
}

.fill-info span {
    margin-left: 5px;
}
```
FILE: script.js
```js
const SVG_NS = 'http://www.w3.org/2000/svg';
const STEP = 88.5; // pixels per 2000 mm

function line(svg, x1, y1, x2, y2, dash) {
    const el = document.createElementNS(SVG_NS, 'path');
    el.setAttribute('d', `M${x1} ${y1}L${x2} ${y2}`);
    el.setAttribute('stroke', '#bbb');
    if (dash) el.setAttribute('stroke-dasharray', dash);
    svg.appendChild(el);
}

function label(svg, x, y, text, rotate) {
    const el = document.createElementNS(SVG_NS, 'text');
    el.setAttribute('x', x);
    el.setAttribute('y', y);
    if (rotate) el.setAttribute('transform', `rotate(-90 ${x} ${y})`);
    el.textContent = text;
    svg.appendChild(el);
}

function tickSize(i) {
    if (i % 10 === 0) return 5;
    return i % 5 === 0 ? 2 : 1;
}

function drawRulers() {
    const h = document.getElementById('ruler-h');
    const v = document.getElementById('ruler-v');
    for (let i = -13; i <= 101; i++) {
        const x = Math.round(120 + i * STEP / 10) + 0.5;
        line(h, x, 16 - tickSize(i), x, 16);
        if (i % 10 === 0 && i <= 90) label(h, x, 10, Math.abs(i * 200));
    }
    label(h, 1020, 10, '毫米');
    line(h, 325.5, 0, 325.5, 17, '3 2');
    for (let i = -2; i <= 65; i++) {
        const y = Math.round(20 + i * STEP / 10) + 0.5;
        line(v, 16 - tickSize(i), y, 16, y);
        if (i % 10 === 0) label(v, 11, y - 2, 14000 - i * 200, true);
    }
    line(v, 0, 58.5, 17, 58.5, '3 2');
}

function place(className, x, y, text) {
    const el = document.createElement('div');
    el.className = className;
    el.style.left = `${x}px`;
    el.style.top = `${y}px`;
    if (text) el.textContent = text;
    document.getElementById('canvas').prepend(el);
}

function drawObjects() {
    [160, 210, 260, 310, 360, 410].forEach(y => {
        place('shape', 111, y, '1');
        place('shape', 204, y, '1');
    });
    [324, 425, 541, 604].forEach(x => place('shape', x, 410, '1'));
    [[100, 150], [100, 289], [100, 429], [375, 429], [650, 429]].forEach(([x, y]) => place('handle', x, y));
}

const columns = [
    'none #231815 #3b3534 #595757 #717071 #888788 #9f9fa0 #b5b5b6 #c9caca #dcdddd #efefef #f7f7f7 #1d2088 #00a0e9 #009944 #fff100 #e60012 #e4007f #a63c82 #f08300 #f5b1b2 #8a756e #cfcbe6 #a59aca #6c8cc8 #7668ae #9084b0 #4c628f #55506f #6f88a3 #008cd6 #9fd7f5 #b4cbd9 #96a5b3 #6b7c85',
    '#48525b #4f7270 #438c7c #6f9896 #53a694 #57a46f #59c1cf #4da8b4 #b5cdb8 #d3e9d6 #9fd0a4 #93a890 #99a77c #b8c46e #b8c999 #abcd03 #d6e37a #595646 #86846f #b3b198 #b5b07c #dcd267 #fff27d #fff3ac #fffbdb #b19870 #d3965a #d9b562 #ef8336 #f6ab3a #f4ab6a #fdd000 #fad59c #857252 #a95a3c',
    '#cd702d #f18760 #f5b08e #fad8c8 #ae7478 #cd6e6c #cf6f88 #e60044 #ef8480 #e9546b #d39a9a #86596e #aa4b7a #f4b4d0 #d39cb8 #b096a6 #dcb8cc #ac5b95 #c94b96 #cb7bb3 #b394b4 #d6a8d4 #6c506f #8f7490 #a771b0 #a40080 #8f3b86 #7a4397 #764a80 #68378a #000000'
];

function drawSwatches() {
    const root = document.getElementById('swatches');
    columns.forEach((list, c) => {
        const col = document.createElement('div');
        col.className = 'swatch-col';
        list.split(' ').forEach((color, r) => {
            const sw = document.createElement('div');
            sw.className = 'swatch';
            if (color === 'none') sw.classList.add('none');
            else sw.style.background = color;
            if ((c === 0 && r === 6) || (c === 1 && r === 26)) sw.classList.add('current');
            col.appendChild(sw);
        });
        root.appendChild(col);
    });
}

drawRulers();
drawObjects();
drawSwatches();
```
